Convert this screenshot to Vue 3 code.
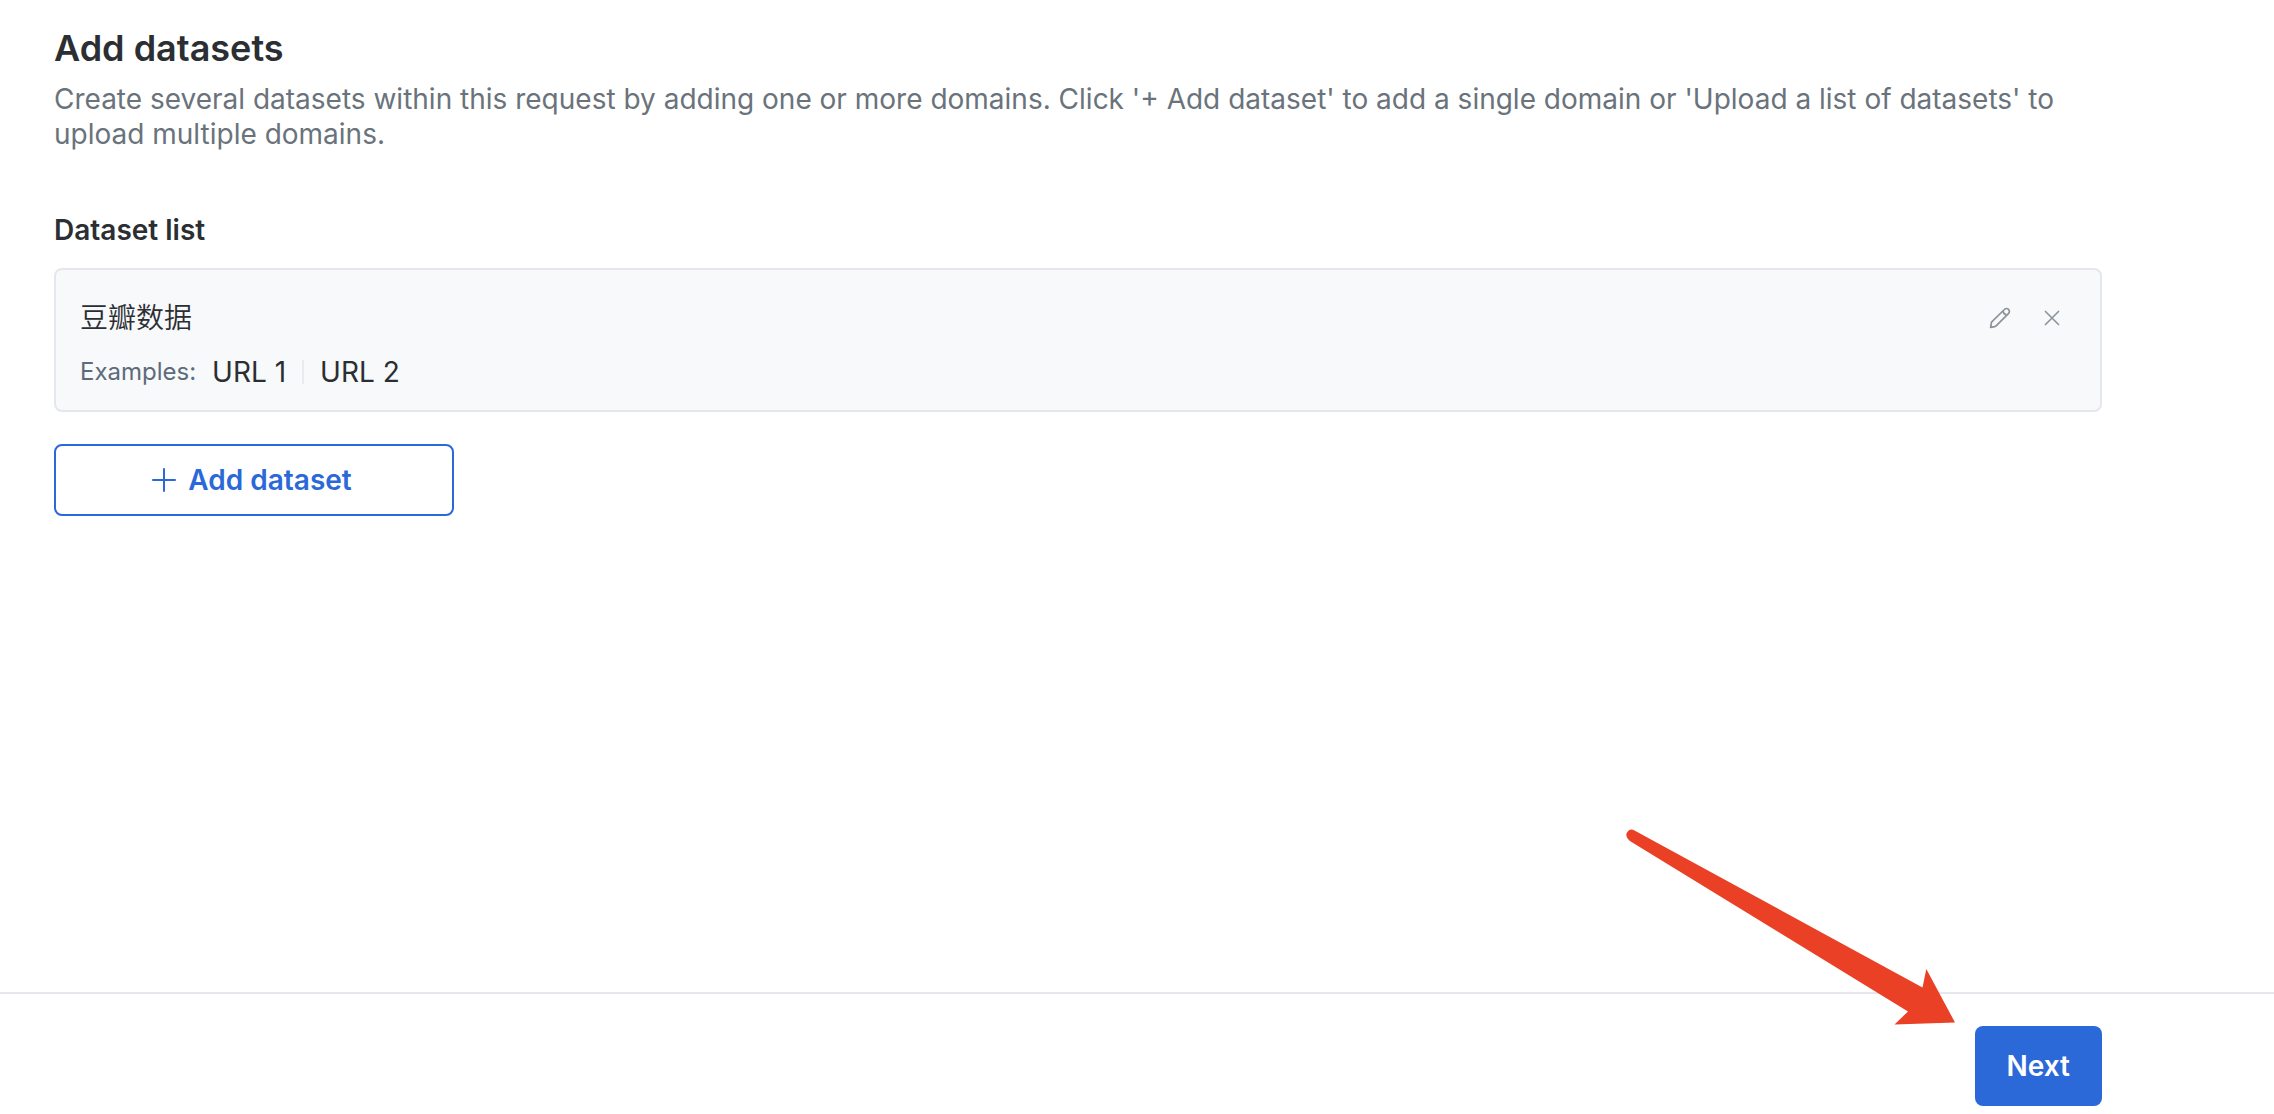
<script setup>
import { ref } from 'vue'

const datasets = ref([{ name: '豆瓣数据', examples: ['URL 1', 'URL 2'] }])

function removeDataset(index) {
  datasets.value.splice(index, 1)
}
</script>

<template>
  <div class="page">
    <main class="content">
      <h1 class="title">Add datasets</h1>
      <p class="description">
        Create several datasets within this request by adding one or more domains. Click '+ Add
        dataset' to add a single domain or 'Upload a list of datasets' to upload multiple domains.
      </p>

      <h2 class="subtitle">Dataset list</h2>
      <ul class="list">
        <li v-for="(dataset, index) in datasets" :key="dataset.name" class="card">
          <div class="card-head">
            <span class="name">{{ dataset.name }}</span>
            <div class="actions">
              <button type="button" class="icon-button" aria-label="Edit dataset">
                <svg width="22" height="22" viewBox="0 0 22 22" fill="none" stroke="currentColor" stroke-width="1.7" stroke-linejoin="round">
                  <path d="M1.6 20.4 2.5 15.2 15.4 2.5C16.6 1.2 18.4 1.2 19.5 2.4C20.7 3.5 20.7 5.3 19.4 6.6L6.6 19.3C5.2 20 3.4 20.2 1.6 20.4Z" />
                  <path d="M13.9 4C14.3 6.2 15.7 7.6 17.9 8" />
                </svg>
              </button>
              <button type="button" class="icon-button" aria-label="Remove dataset" @click="removeDataset(index)">
                <svg width="22" height="22" viewBox="0 0 22 22" fill="none" stroke="currentColor" stroke-width="1.6">
                  <path d="M4 4 18 18M18 4 4 18" />
                </svg>
              </button>
            </div>
          </div>
          <div class="examples">
            <span class="label">Examples:</span>
            <span v-for="example in dataset.examples" :key="example" class="example">{{ example }}</span>
          </div>
        </li>
      </ul>

      <button type="button" class="add-button">
        <svg width="24" height="24" viewBox="0 0 24 24" fill="none" stroke="currentColor" stroke-width="2" stroke-linecap="round">
          <path d="M12 1V23M1 12H23" />
        </svg>
        Add dataset
      </button>
    </main>

    <footer class="footer">
      <div class="next-wrap">
        <svg class="arrow" width="330" height="198" viewBox="0 0 330 198" aria-hidden="true">
          <path d="M8.5 2.5 296.5 159.5 300.3 141 329 194.5 268.5 196.5 282 183.5 5.5 14C-.5 10-.5 6 1.5 4C3.5 1 6 1 8.5 2.5Z" fill="#ea4025" />
        </svg>
        <button type="button" class="next-button">Next</button>
      </div>
    </footer>
  </div>
</template>

<style>
body {
  margin: 0;
  background: #fff;
}
</style>

<style scoped>
.page {
  box-sizing: border-box;
  display: flex;
  flex-direction: column;
  min-height: 100vh;
  color: #2b2f33;
  font-family: Inter, "Noto Sans CJK SC", sans-serif;
  font-size: 28px;
  line-height: 35px;
}

.content {
  flex: 1;
  padding: 26px 172px 32px 54px;
}

.title {
  margin: 0 0 12px;
  font-size: 36px;
  font-weight: 600;
  line-height: 44px;
}

.description {
  margin: 0;
  color: #6a737b;
}

.subtitle {
  margin: 60px 0 20px;
  font-size: 28px;
  font-weight: 600;
  line-height: 36px;
}

.list {
  display: flex;
  flex-direction: column;
  gap: 16px;
  margin: 0;
  padding: 0;
  list-style: none;
}

.card {
  display: flex;
  flex-direction: column;
  gap: 18px;
  padding: 30px 37px 20px 24px;
  border: 2px solid #e6e7ed;
  border-radius: 8px;
  background: #f8f9fb;
}

.card-head {
  display: flex;
  align-items: center;
  justify-content: space-between;
  height: 36px;
}

.name {
  font-weight: 350;
  line-height: 36px;
}

.actions {
  display: flex;
  gap: 30px;
}

.icon-button {
  display: flex;
  padding: 0;
  border: 0;
  background: none;
  color: #8b949b;
  cursor: pointer;
}

.examples {
  display: flex;
  align-items: center;
  height: 36px;
}

.label {
  margin-right: 16px;
  color: #5d6b7a;
  font-size: 24px;
  line-height: 36px;
}

.example + .example {
  margin-left: 16px;
  padding-left: 16px;
  border-left: 2px solid #eaebef;
  line-height: 24px;
}

.add-button {
  display: flex;
  align-items: center;
  justify-content: center;
  gap: 12px;
  width: 400px;
  height: 72px;
  margin-top: 32px;
  padding: 0 10px 0 6px;
  border: 2px solid #2b68d8;
  border-radius: 8px;
  background: #fff;
  color: #2b68d8;
  font: inherit;
  font-weight: 600;
  cursor: pointer;
}

.footer {
  display: flex;
  justify-content: flex-end;
  padding: 32px 172px 8px 54px;
  border-top: 2px solid #e6e7ed;
}

.next-wrap {
  position: relative;
}

.arrow {
  position: absolute;
  right: 146px;
  bottom: 80px;
  pointer-events: none;
}

.next-button {
  display: block;
  height: 80px;
  padding: 0 32px;
  border: 0;
  border-radius: 8px;
  background: #2b68d8;
  color: #fff;
  font: inherit;
  font-weight: 600;
  cursor: pointer;
}
</style>
